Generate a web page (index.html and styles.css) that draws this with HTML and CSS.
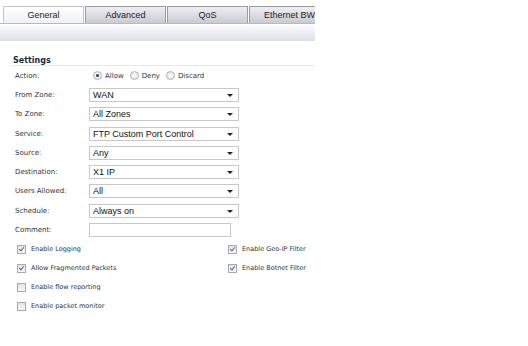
FILE: index.html
```html
<!DOCTYPE html>
<html lang="en">
<head>
    <meta charset="UTF-8">
    <title>Edit Rule</title>
    <link rel="stylesheet" href="styles.css">
</head>
<body>

    <!-- Tabs -->
    <div class="tabs">
        <div class="tab active">General</div>
        <div class="tab">Advanced</div>
        <div class="tab">QoS</div>
        <div class="tab last">Ethernet BWM</div>
    </div>
    <div class="tab-band"></div>

    <!-- Settings -->
    <div class="settings">
        <div class="section-title">Settings</div>

        <div class="row">
            <label>Action:</label>
            <div class="radios">
                <span class="radio checked"></span><span class="radio-label">Allow</span>
                <span class="radio"></span><span class="radio-label">Deny</span>
                <span class="radio"></span><span class="radio-label">Discard</span>
            </div>
        </div>
        <div class="row">
            <label>From Zone:</label>
            <div class="select">WAN</div>
        </div>
        <div class="row">
            <label>To Zone:</label>
            <div class="select">All Zones</div>
        </div>
        <div class="row">
            <label>Service:</label>
            <div class="select">FTP Custom Port Control</div>
        </div>
        <div class="row">
            <label>Source:</label>
            <div class="select">Any</div>
        </div>
        <div class="row">
            <label>Destination:</label>
            <div class="select">X1 IP</div>
        </div>
        <div class="row">
            <label>Users Allowed:</label>
            <div class="select">All</div>
        </div>
        <div class="row">
            <label>Schedule:</label>
            <div class="select">Always on</div>
        </div>
        <div class="row">
            <label>Comment:</label>
            <div class="text-input"></div>
        </div>

        <!-- Options -->
        <div class="options">
            <div class="col">
                <div class="check-row"><span class="checkbox checked"></span>Enable Logging</div>
                <div class="check-row"><span class="checkbox checked"></span>Allow Fragmented Packets</div>
                <div class="check-row"><span class="checkbox"></span>Enable flow reporting</div>
                <div class="check-row"><span class="checkbox"></span>Enable packet monitor</div>
            </div>
            <div class="col right">
                <div class="check-row"><span class="checkbox checked"></span>Enable Geo-IP Filter</div>
                <div class="check-row"><span class="checkbox checked"></span>Enable Botnet Filter</div>
            </div>
        </div>
    </div>

</body>
</html>
```
FILE: styles.css
```css
body {
    margin: 0;
    background-color: #fff;
    font-family: "DejaVu Sans", Verdana, sans-serif;
    color: #333;
}
.tabs {
    display: flex;
    margin-top: 6px;
    padding-left: 3px;
    width: 312px;
    overflow: hidden;
    border-bottom: 1px solid #b8b8c0;
    height: 17px;
    box-sizing: content-box;
}
.tab {
    flex: none;
    width: 81px;
    height: 17px;
    box-sizing: border-box;
    border: 1px solid #9a9aa4;
    border-bottom: none;
    margin-right: 1px;
    background: linear-gradient(#eeeef2, #cacad2);
    font-family: "Liberation Sans", Arial, sans-serif;
    font-size: 9px;
    color: #222;
    text-align: center;
    line-height: 16px;
    white-space: nowrap;
}
.tab.active {
    background: linear-gradient(#ffffff, #eef0f5);
    border-color: #c4c4cc;
    height: 18px;
    margin-bottom: -1px;
}
.tab.last {
    width: 80px;
    text-align: left;
    padding-left: 14px;
}
.tab-band {
    width: 315px;
    height: 17px;
    background: linear-gradient(#ffffff, #dcdfea);
}
.settings {
    padding: 15px 0 0 10px;
    width: 305px;
}
.section-title {
    font-size: 8px;
    line-height: 9px;
    font-weight: bold;
    color: #1c2a44;
    padding-left: 3px;
    border-bottom: 1px solid #e8e8ec;
}
.row {
    display: flex;
    align-items: center;
    height: 19.3px;
}
.row label {
    width: 74px;
    padding-left: 5px;
    flex: none;
    font-size: 7px;
    color: #333;
}
.radios {
    display: flex;
    align-items: center;
    font-size: 7px;
    padding-left: 4px;
}
.radio {
    width: 7px;
    height: 7px;
    border-radius: 50%;
    border: 1px solid #b0b0b8;
    background: radial-gradient(#fff, #dcdce2);
    margin-right: 3px;
    position: relative;
}
.radio.checked::after {
    content: "";
    position: absolute;
    left: 2px;
    top: 2px;
    width: 3px;
    height: 3px;
    border-radius: 50%;
    background: #2a3a5a;
}
.radio-label {
    margin-right: 6px;
}
.select {
    width: 150px;
    height: 14px;
    box-sizing: border-box;
    border: 1px solid #c8c8cc;
    font-family: "Liberation Sans", Arial, sans-serif;
    font-size: 9px;
    color: #111;
    line-height: 12px;
    padding-left: 3px;
    position: relative;
}
.select::after {
    content: "";
    position: absolute;
    right: 5px;
    top: 5px;
    border-left: 3px solid transparent;
    border-right: 3px solid transparent;
    border-top: 3px solid #222;
}
.text-input {
    width: 142px;
    height: 14px;
    box-sizing: border-box;
    border: 1px solid #c8c8cc;
}
.options {
    display: flex;
}
.col {
    width: 211px;
}
.col.right {
    width: auto;
}
.check-row {
    display: flex;
    align-items: center;
    height: 19px;
    font-size: 6.5px;
    color: #333;
    padding-left: 7px;
}
.checkbox {
    width: 7px;
    height: 7px;
    border: 1px solid #a8a8b0;
    background: linear-gradient(#e4e4ea, #f8f8fa);
    margin-right: 5px;
    position: relative;
}
.checkbox.checked::after {
    content: "";
    position: absolute;
    left: 2px;
    top: 0px;
    width: 2px;
    height: 4px;
    border: solid #5a6a8a;
    border-width: 0 1.5px 1.5px 0;
    transform: rotate(40deg);
}
```
